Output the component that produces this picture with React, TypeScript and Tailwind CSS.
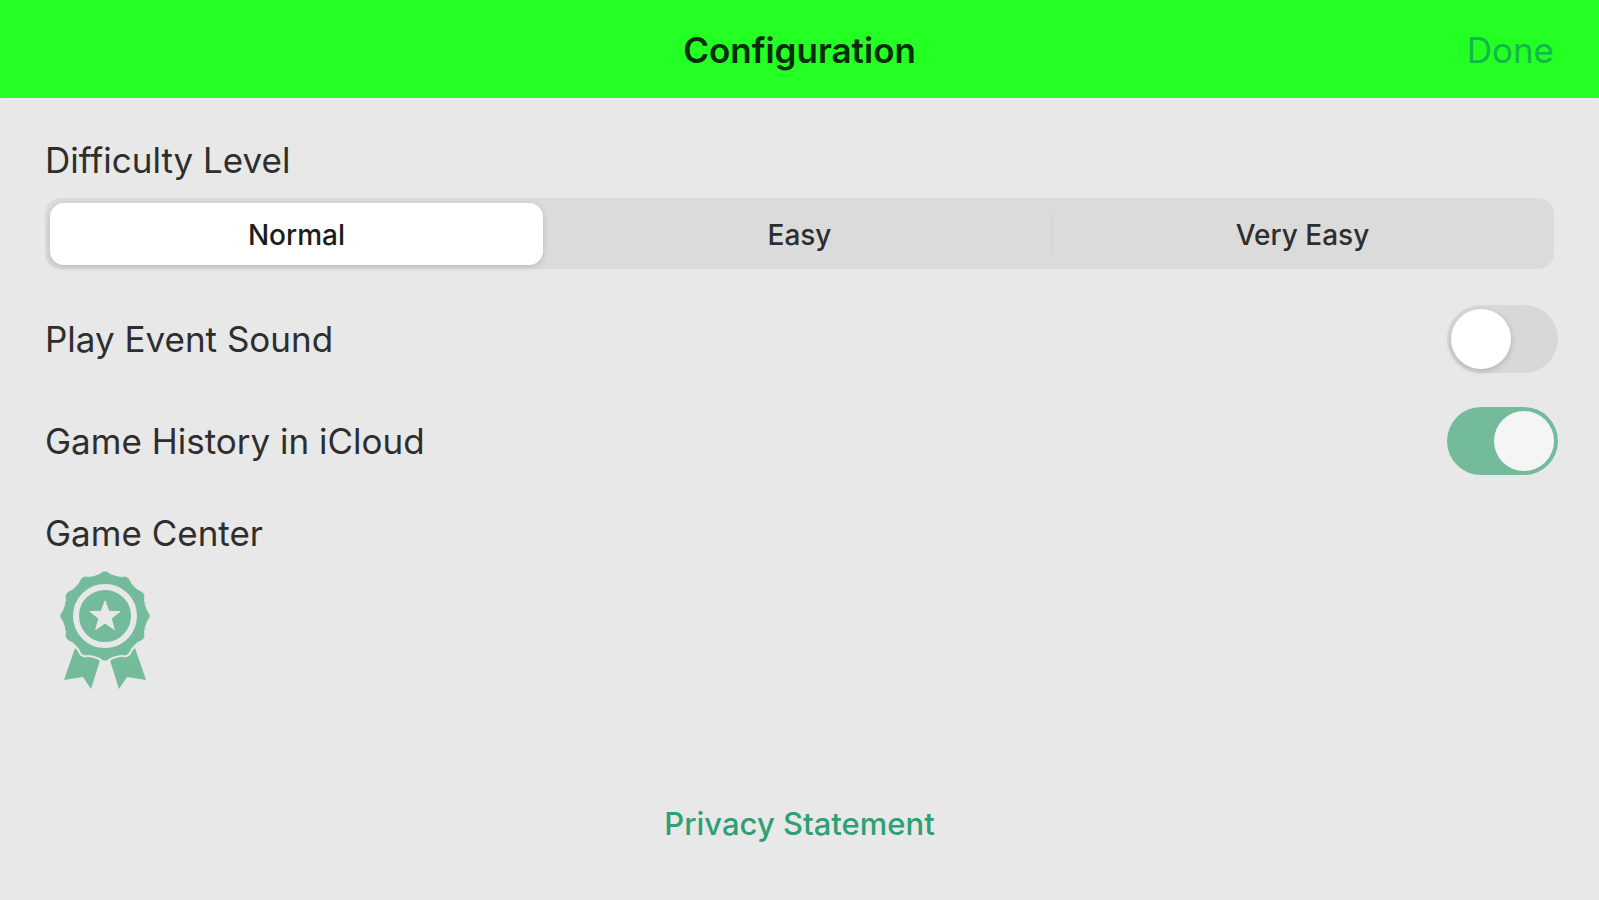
import { useState } from "react";

const LEVELS = ["Normal", "Easy", "Very Easy"] as const;

function polar(r: number, deg: number) {
  const a = (deg * Math.PI) / 180;
  return `${(45 + r * Math.sin(a)).toFixed(2)} ${(45 - r * Math.cos(a)).toFixed(2)}`;
}

// twelve rounded lobes, the first one pointing up
const ROSETTE = `M${polar(41, -15)} ${Array.from(
  { length: 12 },
  (_, i) => `Q${polar(41, i * 30 - 8)} ${polar(44, i * 30 - 2)} L${polar(44, i * 30 + 2)} Q${polar(41, i * 30 + 8)} ${polar(41, i * 30 + 15)}`,
).join(" ")} Z`;

function RosetteIcon() {
  return (
    <svg viewBox="0 0 90 120" className="h-[120px] w-[90px]" fill="#73bb9b" aria-hidden>
      <path d="M15 77 L24 86 L39 86 L39.5 91 L31 118 L23 106 L4 109 Z" />
      <path d="M75 77 L66 86 L51 86 L50.5 91 L59 118 L67 106 L86 109 Z" />
      <path d={ROSETTE} stroke="#e8e8e8" strokeWidth={5} strokeLinejoin="round" />
      <path d={ROSETTE} stroke="#73bb9b" strokeWidth={1} strokeLinejoin="round" />
      <circle cx={45} cy={45} r={29} fill="none" stroke="#e8e8e8" strokeWidth={6} />
      <path
        fill="#e8e8e8"
        stroke="#e8e8e8"
        strokeLinejoin="round"
        d="M45 30 L48.8 40.2 L60 40.6 L51.2 47.4 L54.3 58.5 L45 52 L35.7 58.5 L38.8 47.4 L30 40.6 L41.2 40.2 Z"
      />
    </svg>
  );
}

type ToggleRowProps = {
  id: string;
  label: string;
  checked: boolean;
  onChange: (value: boolean) => void;
};

function ToggleRow({ id, label, checked, onChange }: ToggleRowProps) {
  return (
    <div className="-mr-1 flex items-center justify-between">
      <label htmlFor={id}>{label}</label>
      <input
        id={id}
        type="checkbox"
        role="switch"
        checked={checked}
        onChange={(e) => onChange(e.target.checked)}
        className="flex h-[68px] w-[111px] shrink-0 appearance-none items-center rounded-full bg-[#d8d8d8] px-1 before:size-[60px] before:rounded-full before:bg-white before:shadow-[0_2px_6px_rgba(0,0,0,0.18)] before:content-[''] checked:justify-end checked:bg-[#73bb9b] checked:before:bg-[#f5f5f5] checked:before:shadow-none"
      />
    </div>
  );
}

export default function App() {
  const [level, setLevel] = useState<string>("Normal");
  const [sound, setSound] = useState(false);
  const [history, setHistory] = useState(true);

  return (
    <div className="flex min-h-screen flex-col bg-[#e8e8e8] font-['Inter',sans-serif] text-[35px] leading-[44px] text-[#2e2e2e]">
      <header className="grid h-[98px] grid-cols-[1fr_auto_1fr] items-center bg-[#24ff24] px-[45px] pt-0.5 shadow-[0_2px_2px_#f0e4f4]">
        <h1 className="col-start-2 font-semibold text-[#062c06]">Configuration</h1>
        <button type="button" className="justify-self-end text-[#12b84a]">
          Done
        </button>
      </header>

      <main className="flex grow flex-col px-[45px] pt-10">
        <fieldset>
          <legend>Difficulty Level</legend>
          <div className="mt-4 grid h-[71px] grid-cols-3 rounded-2xl bg-[#dbdbdb] text-[28px] font-medium">
            {LEVELS.map((name) => (
              <label
                key={name}
                className="relative flex items-center justify-center last:before:absolute last:before:left-0 last:before:h-10 last:before:w-0.5 last:before:bg-[#d5d5d9]"
              >
                <input
                  type="radio"
                  name="level"
                  value={name}
                  checked={level === name}
                  onChange={() => setLevel(name)}
                  className="peer sr-only"
                />
                <span className="mx-[5px] flex h-[62px] grow items-center justify-center rounded-[14px] pt-0.5 peer-checked:bg-white peer-checked:text-[#1c1c1c] peer-checked:shadow-[0_2px_6px_rgba(0,0,0,0.15)]">
                  {name}
                </span>
              </label>
            ))}
          </div>
        </fieldset>

        <div className="mt-9 flex flex-col gap-[34px]">
          <ToggleRow id="sound" label="Play Event Sound" checked={sound} onChange={setSound} />
          <ToggleRow id="history" label="Game History in iCloud" checked={history} onChange={setHistory} />
        </div>

        <h2 className="mt-9">Game Center</h2>
        <button type="button" aria-label="Game Center" className="mt-4 ml-[15px] self-start">
          <RosetteIcon />
        </button>
      </main>

      <footer className="pb-14 text-center text-[31px] leading-10">
        <a href="#privacy" className="font-medium text-[#2fa073]">
          Privacy Statement
        </a>
      </footer>
    </div>
  );
}
